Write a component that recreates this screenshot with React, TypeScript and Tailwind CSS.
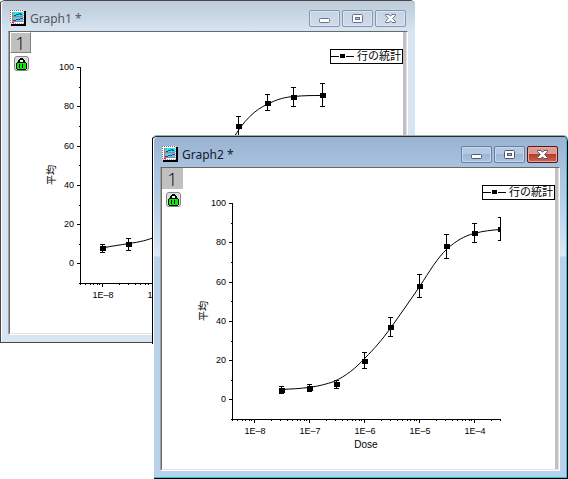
import React from "react";

type Point = { x: number; y: number; top: number; bottom: number };

type GraphProps = {
  name: string;
  curve: string;
  points: Point[];
};

const yLabels = [100, 80, 60, 40, 20, 0];
const yTicks = [67, 106, 146, 185, 224, 263];
const yMinor = [87, 126, 165, 205, 244, 283];
const decades = [
  { label: "1E–8", x: 102 },
  { label: "1E–7", x: 157 },
  { label: "1E–6", x: 212 },
  { label: "1E–5", x: 267 },
  { label: "1E–4", x: 322 },
];

const xMinor: number[] = [];
for (let d = -9; d < -3; d++) {
  for (let n = 2; n < 10; n++) {
    const x = Math.round(102 + 55 * (d + 8 + Math.log10(n)));
    if (x >= 80 && x <= 348) xMinor.push(x);
  }
}

function Graph({ name, curve, points }: GraphProps) {
  return (
    <svg
      role="img"
      aria-label={name}
      width="372"
      height="301"
      viewBox="31 32 372 301"
      className="block shrink-0 font-['Liberation_Sans','Noto_Sans_CJK_JP',sans-serif]"
    >
      <g fill="#000" shapeRendering="crispEdges">
        <rect x="80" y="67" width="1" height="217" />
        <rect x="80" y="283" width="269" height="1" />
        {yTicks.map((y) => (
          <rect key={y} x="77" y={y} width="3" height="1" />
        ))}
        {yMinor.map((y) => (
          <rect key={y} x="79" y={y} width="1" height="1" />
        ))}
        {decades.map((d) => (
          <rect key={d.x} x={d.x} y="284" width="1" height="3" />
        ))}
        {xMinor.map((x) => (
          <rect key={x} x={x} y="284" width="1" height="1" />
        ))}
      </g>

      <g fontSize="9" textAnchor="end">
        {yLabels.map((v, i) => (
          <text key={v} x="74" y={yTicks[i] + 3}>
            {v}
          </text>
        ))}
      </g>
      <g fontSize="9" textAnchor="middle">
        {decades.map((d) => (
          <text key={d.x} x={d.x + 1} y="298">
            {d.label}
          </text>
        ))}
      </g>
      <text x="214" y="312" fontSize="10" textAnchor="middle">
        Dose
      </text>
      <text
        x="0"
        y="0"
        fontSize="10"
        textAnchor="middle"
        transform="translate(55 175) rotate(-90)"
      >
        平均
      </text>

      <clipPath id={name + "-plot"}>
        <rect x="80" y="60" width="269" height="224" />
      </clipPath>
      <g clipPath={`url(#${name}-plot)`}>
        <path d={curve} fill="none" stroke="#000" strokeWidth="1" />
        <g fill="#000" shapeRendering="crispEdges">
          {points.map((p) => (
            <g key={p.x}>
              <rect x={p.x} y={p.top} width="1" height={p.bottom - p.top} />
              <rect x={p.x - 2} y={p.top} width="5" height="1" />
              <rect x={p.x - 2} y={p.bottom} width="5" height="1" />
              <rect x={p.x - 2} y={p.y - 2} width="6" height="5" />
            </g>
          ))}
        </g>
      </g>

      <g shapeRendering="crispEdges">
        <rect x="330" y="49" width="74" height="1" />
        <rect x="330" y="63" width="74" height="1" />
        <rect x="330" y="49" width="1" height="15" />
        <rect x="402" y="49" width="1" height="15" />
        <rect x="331" y="56" width="8" height="1" />
        <rect x="340" y="54" width="5" height="4" />
        <rect x="346" y="56" width="8" height="1" />
      </g>
      <text x="357" y="60" fontSize="11">
        行の統計
      </text>
    </svg>
  );
}

function GraphIcon() {
  return (
    <svg width="16" height="16" viewBox="0 0 16 16" shapeRendering="crispEdges" aria-hidden="true">
      <rect x="1" y="1" width="15" height="15" fill="#000" />
      <rect x="0" y="0" width="14" height="14" fill="#fff" />
      <path d="M0 0.5H14M0.5 0V14" stroke="#777" strokeDasharray="1 1" />
      <path d="M1 13.5H14M13.5 1V14" stroke="#b89898" strokeDasharray="1 1" />
      <rect x="2" y="2" width="11" height="10" fill="#e86060" />
      <rect x="3" y="2" width="10" height="4" fill="#20e4f4" />
      <rect x="3" y="7" width="10" height="4" fill="#20e4f4" />
      <g fill="#204858">
        <rect x="4" y="5" width="2" height="1" />
        <rect x="6" y="4" width="3" height="1" />
        <rect x="9" y="3" width="2" height="1" />
        <rect x="10" y="4" width="2" height="1" />
      </g>
      <g fill="#3038e0">
        <rect x="3" y="10" width="3" height="1" />
        <rect x="6" y="9" width="4" height="1" />
        <rect x="10" y="8" width="3" height="1" />
      </g>
      <rect x="2" y="12" width="2" height="1" fill="#d02020" />
    </svg>
  );
}

function LockButton() {
  return (
    <button
      type="button"
      aria-label="Lock"
      className="mt-[3px] ml-1 flex size-[15px] items-center justify-center rounded-[3px] border border-[#858585] bg-[#dedede]"
    >
      <svg width="11" height="13" viewBox="0 0 11 13" shapeRendering="crispEdges" className="shrink-0" aria-hidden="true">
        <path d="M2 6V3H3V2H4V1H7V2H8V3H9V6H7V3H4V6Z" fill="#000" />
        <path d="M1 5H10V6H11V12H10V13H1V12H0V6H1Z" fill="#000" />
        <rect x="4" y="3" width="3" height="2" fill="#fff" />
        <rect x="1" y="6" width="9" height="6" fill="#00f000" />
        <rect x="3" y="7" width="1" height="4" fill="#000" />
        <rect x="6" y="7" width="1" height="4" fill="#000" />
      </svg>
    </button>
  );
}

const captionIcons = [
  {
    label: "Minimize",
    art: <rect x="5.5" y="7.5" width="10" height="4" rx="1" fill="#fff" />,
  },
  {
    label: "Maximize",
    art: (
      <>
        <rect x="5.5" y="3.5" width="10" height="8" rx="1" fill="#fff" />
        <rect x="8.5" y="6.5" width="4" height="2" fill="#a9bfd8" />
      </>
    ),
  },
  {
    label: "Close",
    art: (
      <path
        d="M5.5 3.5H9L10.5 5.2L12 3.5H15.5V4.5L12.7 7.5L15.5 10.5V11.5H12L10.5 9.8L9 11.5H5.5V10.5L8.3 7.5L5.5 4.5Z"
        fill="#fff"
      />
    ),
  },
];

function CaptionButtons({ active }: { active: boolean }) {
  return (
    <div className="flex gap-[2px]">
      {captionIcons.map(({ label, art }) => {
        const look = !active
          ? "border-[#8394b4] bg-linear-to-b from-[#c5d2e0] to-[#d0dcea] inset-ring-[#dde7f1]"
          : label === "Close"
            ? "border-[#5a1420] bg-linear-to-b from-[#dc9a90] from-45% via-[#b93a26] via-50% to-[#cc6450] inset-ring-[#e6aaa0]"
            : "border-[#6480a5] bg-linear-to-b from-[#b4cae4] from-45% via-[#9cb6d4] via-50% to-[#aac4e0] inset-ring-[#c5d8ec]";
        return (
          <button
            key={label}
            type="button"
            aria-label={label}
            className={`flex h-[17px] w-[31px] items-center justify-center rounded-[2px] border inset-ring ${look}`}
          >
            <svg width="21" height="15" viewBox="0 0 21 15" stroke={active ? "#50586a" : "#68718a"} aria-hidden="true">
              {art}
            </svg>
          </button>
        );
      })}
    </div>
  );
}

function GraphWindow({ name, active, curve, points }: GraphProps & { active: boolean }) {
  return (
    <section
      aria-label={name}
      className={
        active
          ? "flex rounded-t-[5px] border-t border-[#222a33] bg-white shadow-[0_-1px_0_#a8a8a8]"
          : "flex rounded-t-[5px] border-t border-b border-[#4b464e] bg-white"
      }
    >
      <div
        className={
          active
            ? "h-[207px] w-[2px] rounded-tl-[5px] border-l border-black"
            : "w-[2px] rounded-tl-[5px] border-l border-[#4b464e]"
        }
      />
      <div
        className={
          active
            ? "rounded-t-[5px] border-r border-b border-black"
            : "rounded-t-[5px]"
        }
      >
        <div
          className={
            active
              ? "rounded-t-[4px] border-r border-b border-[#25c5dc] bg-[linear-gradient(to_bottom,#99b3d0_0px,#a9c2de_30px,#b4cce8_60px,#dce8f5_119px,#b9d1ea_120px)] px-[6px] pb-[6px]"
              : "rounded-t-[4px] bg-[linear-gradient(to_bottom,#bdcad8_0px,#d7e4f1_31px)] pr-[7px] pb-[7px] pl-[6px]"
          }
        >
          <header className="flex h-[30px] items-start justify-between pt-[9px] pr-[2px] pl-[2px]">
            <div className="flex items-start">
              <GraphIcon />
              <h2
                className={
                  active
                    ? "pl-1 font-['Noto_Sans',sans-serif] text-[12px] leading-[18px] text-[#10202f]"
                    : "pl-1 font-['Noto_Sans',sans-serif] text-[12px] leading-[18px] text-[#50565e]"
                }
              >
                {name} *
              </h2>
            </div>
            <CaptionButtons active={active} />
          </header>

          <div className="border-t border-r border-b border-l border-t-[#696969] border-r-white border-b-white border-l-[#a0a0a0]">
            <div className="border-r border-b border-l border-r-[#e3e3e3] border-b-[#e3e3e3] border-l-[#696969]">
              <div className="flex border-r-[3px] border-[#c0c0c0] bg-white">
                <div className="w-[21px]">
                  <button
                    type="button"
                    className={
                      active
                        ? "flex h-[21px] w-[21px] items-center justify-center bg-[#c0c0c0] font-['Open_Sans',sans-serif] text-[18px] leading-none font-light"
                        : "flex h-[21px] w-[21px] items-center justify-center border border-t-white border-r-[#808080] border-b-[#808080] border-l-white bg-[#c0c0c0] font-['Open_Sans',sans-serif] text-[18px] leading-none font-light"
                    }
                  >
                    1
                  </button>
                  <LockButton />
                </div>
                <Graph name={name} curve={curve} points={points} />
              </div>
            </div>
          </div>
        </div>
      </div>
    </section>
  );
}

const graph1 = {
  name: "Graph1",
  curve:
    "M102 248 C112 246 120 245 129 243.5 C140 242 148 240 155 237 C190 225 212 175 233 139 C243 121 256 109 267 104.5 C277 99 286 97 294 96.5 C304 95.5 312 95.5 322 95.5",
  points: [
    { x: 102, y: 248, top: 244, bottom: 252 },
    { x: 128, y: 244, top: 238, bottom: 250 },
    { x: 238, y: 126, top: 116, bottom: 136 },
    { x: 267, y: 103, top: 94, bottom: 110 },
    { x: 293, y: 97, top: 87, bottom: 106 },
    { x: 322, y: 95, top: 83, bottom: 106 },
  ],
};

const graph2 = {
  name: "Graph2",
  curve:
    "M129 253.5 C140 253 148 252.5 157 251.5 C167 250 175 248 182 245.5 C194 240 204 232 213 222 C222 213 230 204 239 191.5 C249 178 258 164 268 150 C277 136 286 121 295 113 C304 105 312 100 322 97.5 C331 95 340 94 349 93.5",
  points: [
    { x: 129, y: 254, top: 250, bottom: 257 },
    { x: 157, y: 252, top: 248, bottom: 255 },
    { x: 184, y: 248, top: 244, bottom: 252 },
    { x: 212, y: 225, top: 216, bottom: 232 },
    { x: 238, y: 191, top: 181, bottom: 200 },
    { x: 267, y: 150, top: 138, bottom: 161 },
    { x: 294, y: 110, top: 98, bottom: 122 },
    { x: 322, y: 97, top: 87, bottom: 106 },
    { x: 348, y: 93, top: 81, bottom: 104 },
  ],
};

export default function App() {
  return (
    <main className="relative min-h-screen overflow-hidden bg-white text-black">
      <div className="absolute top-0 left-0">
        <GraphWindow active={false} {...graph1} />
      </div>
      <div className="absolute top-[136px] left-[152px]">
        <GraphWindow active {...graph2} />
      </div>
    </main>
  );
}
